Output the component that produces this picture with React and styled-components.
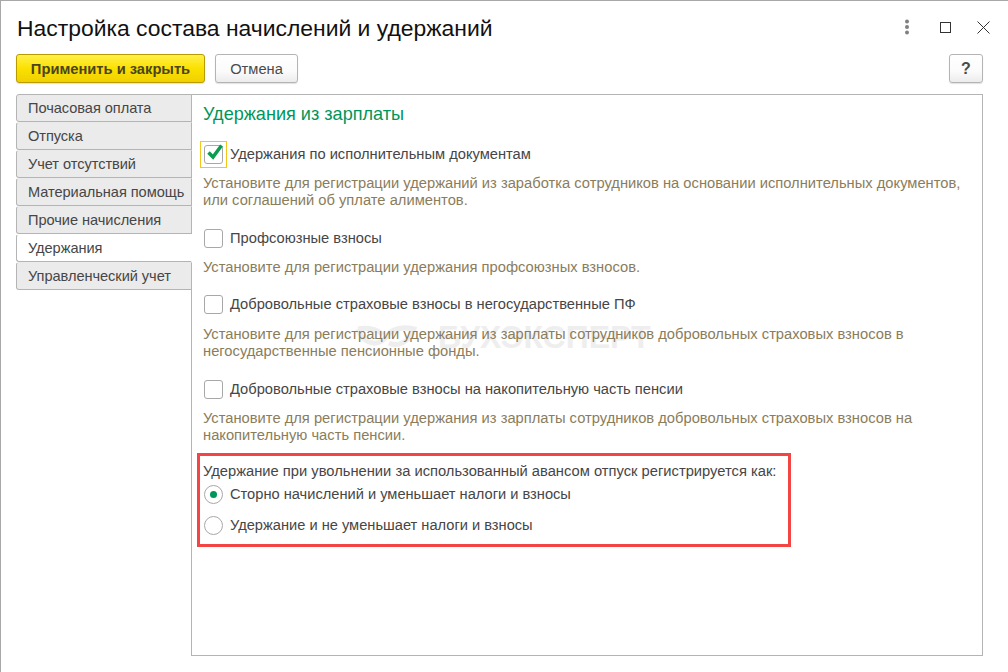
import React from "react";
import styled, {createGlobalStyle} from "styled-components";

const GlobalStyle = createGlobalStyle`
    html, body {
        margin: 0;
        padding: 0;
        background: #fff;
    }
    body {
        font-family: "Liberation Sans", Arial, sans-serif;
    }
`;

const Window = styled.div`
    box-sizing: border-box;
    width: 1008px;
    height: 672px;
    background: #fff;
    border-top: 1px solid #a8a8a8;
    border-left: 1px solid #a8a8a8;
    padding: 0 25px 0 15px;
    display: flex;
    flex-direction: column;
    overflow: hidden;
`;

const TitleBar = styled.div`
    display: flex;
    align-items: center;
    justify-content: space-between;
    height: 53px;
`;

const Title = styled.h1`
    margin: 0 0 0 1px;
    font-size: 22.9px;
    font-weight: 400;
    color: #111;
    line-height: 54px;
`;

const WindowIcons = styled.div`
    display: flex;
    align-items: center;
    margin-right: -7px;
    margin-top: -1px;
    svg { display: block; }
    svg:nth-child(1) { margin-right: 30px; }
    svg:nth-child(2) { margin-right: 26px; }
`;

const Toolbar = styled.div`
    display: flex;
    align-items: flex-start;
    height: 40px;
    gap: 10px;
`;

const Button = styled.button`
    box-sizing: border-box;
    height: 29px;
    padding: 0;
    width: ${p => p.$w}px;
    border: 1px solid ${p => (p.$primary ? "#b89b00" : "#b4b4b4")};
    border-radius: 3px;
    background: ${p => (p.$primary ? "linear-gradient(#fff04a 0%, #fbe100 50%, #f0d000 100%)" : "linear-gradient(#fff 0%, #fbfbfb 60%, #ececec 100%)")};
    box-shadow: 0 1px 1px rgba(0,0,0,.12);
    font-family: inherit;
    font-size: 14.7px;
    font-weight: ${p => (p.$primary ? 700 : 400)};
    color: ${p => (p.$primary ? "#4a4420" : "#4a4a4a")};
`;

const HelpButton = styled(Button)`
    margin-left: auto;
    font-size: 16px;
    font-weight: 700;
`;

const Main = styled.div`
    display: flex;
    align-items: stretch;
    height: 562px;
`;

const Tabs = styled.div`
    width: 176px;
    flex: none;
    position: relative;
    z-index: 1;
`;

const Tab = styled.div`
    box-sizing: border-box;
    height: 28px;
    padding: 0 0 1px 11px;
    display: flex;
    align-items: center;
    white-space: nowrap;
    font-size: 14.6px;
    letter-spacing: -0.05px;
    color: #464646;
    background: ${p => (p.$active ? "#fff" : "#ebebeb")};
    border: 1px solid #b4b4b4;
    border-right: ${p => (p.$active ? "1px solid #fff" : "1px solid #b4b4b4")};
    border-top-color: ${p => (p.$first ? "#b4b4b4" : "transparent")};
    border-radius: 3px 0 0 3px;
`;

const Content = styled.div`
    position: relative;
    box-sizing: border-box;
    flex: 1;
    margin-left: -1px;
    border: 1px solid #b4b4b4;
    padding: 9px 11px 0 11px;
`;

const Heading = styled.h2`
    margin: 0 0 20px;
    font-size: 18.1px;
    font-weight: 400;
    line-height: 20px;
    color: #00965a;
`;

const Section = styled.div`
    margin-bottom: ${p => p.$gap}px;
`;

const OptionRow = styled.div`
    display: flex;
    align-items: center;
    height: 20px;
    gap: 7px;
    font-size: 14.7px;
    color: #464646;
    white-space: nowrap;
`;

const Box = styled.span`
    position: relative;
    box-sizing: border-box;
    width: 19px;
    height: 19px;
    margin-left: 1px;
    flex: none;
    border: 1px solid #a8a8a8;
    border-radius: 3px;
    background: #fff;
    ${p => p.$focused && `
        &::before {
            content: "";
            position: absolute;
            inset: -5px;
            border: 1px solid #f5c518;
        }
    `}
    svg {
        position: absolute;
        left: 0;
        top: -3px;
    }
`;

const Help = styled.p`
    margin: ${p => p.$top || 11}px 0 0;
    font-size: 14.73px;
    line-height: 17px;
    color: #8a7d5c;
    white-space: nowrap;
`;

const RedFrame = styled.div`
    box-sizing: border-box;
    width: 594px;
    height: 94px;
    margin: 0 0 0 -6px;
    padding: 7px 0 0 3px;
    border: 3px solid #f44545;
`;

const FrameLabel = styled.div`
    font-size: 14.72px;
    line-height: 17px;
    color: #464646;
    white-space: nowrap;
`;

const RadioRow = styled(OptionRow)`
    margin-top: ${p => p.$top}px;
    font-size: 14.65px;
`;

const Radio = styled.span`
    box-sizing: border-box;
    width: 19px;
    height: 19px;
    margin-left: 1px;
    flex: none;
    border: 1px solid #a8a8a8;
    border-radius: 50%;
    background: #fff;
    display: flex;
    align-items: center;
    justify-content: center;
    &::after {
        content: "";
        display: ${p => (p.$on ? "block" : "none")};
        width: 7px;
        height: 7px;
        border-radius: 50%;
        background: #00965a;
    }
`;

const Watermark = styled.div`
    position: absolute;
    left: 163px;
    top: 224px;
    display: flex;
    align-items: center;
    gap: 21px;
    font-size: 32px;
    line-height: 36px;
    font-weight: 700;
    color: #eeeeee;
    z-index: 0;
    svg { display: block; }
`;

const ContentBody = styled.div`
    position: relative;
    z-index: 1;
`;

const tabs = [
    "Почасовая оплата",
    "Отпуска",
    "Учет отсутствий",
    "Материальная помощь",
    "Прочие начисления",
    "Удержания",
    "Управленческий учет",
];

function Option({label, checked, focused}) {
    return (
        <OptionRow>
            <Box $focused={focused}>
                {checked && (
                    <svg width="20" height="20" viewBox="0 0 20 20">
                        <path d="M3.5 9.5 L8 14 L16.5 2.5" fill="none" stroke="#0a9d50" strokeWidth="3.5" />
                    </svg>
                )}
            </Box>
            {label}
        </OptionRow>
    );
}

export default function App() {
    return (
        <Window>
            <GlobalStyle />
            <TitleBar>
                <Title>Настройка состава начислений и удержаний</Title>
                <WindowIcons>
                    <svg width="6" height="16" viewBox="0 0 6 16">
                        <circle cx="3" cy="2.5" r="2" fill="#808080" />
                        <circle cx="3" cy="8" r="2" fill="#808080" />
                        <circle cx="3" cy="13.5" r="2" fill="#808080" />
                    </svg>
                    <svg width="11" height="11" viewBox="0 0 11 11">
                        <rect x="0.5" y="0.5" width="10" height="10" fill="none" stroke="#333" />
                    </svg>
                    <svg width="13" height="13" viewBox="0 0 13 13">
                        <path d="M0.5 0.5 L12.5 12.5 M12.5 0.5 L0.5 12.5" stroke="#333" strokeWidth="1" />
                    </svg>
                </WindowIcons>
            </TitleBar>
            <Toolbar>
                <Button $primary $w={189}>Применить и закрыть</Button>
                <Button $w={83}>Отмена</Button>
                <HelpButton $w={34}>?</HelpButton>
            </Toolbar>
            <Main>
                <Tabs>
                    {tabs.map((t, i) => (
                        <Tab key={t} $first={i === 0} $active={t === "Удержания"}>{t}</Tab>
                    ))}
                </Tabs>
                <Content>
                    <Watermark>
                        <svg width="62" height="24" viewBox="0 0 62 24">
                            <path d="M3 4 C8 20 24 22 31 12 C38 2 50 2 59 4 C54 18 42 22 34 18 M3 4 C12 2 22 4 28 10" fill="none" stroke="#eeeeee" strokeWidth="5" />
                        </svg>
                        БУХЭКСПЕРТ
                    </Watermark>
                    <ContentBody>
                        <Heading>Удержания из зарплаты</Heading>
                        <Section $gap={19}>
                            <Option label="Удержания по исполнительным документам" checked focused />
                            <Help>Установите для регистрации удержаний из заработка сотрудников на основании исполнительных документов,<br />или соглашений об уплате алиментов.</Help>
                        </Section>
                        <Section $gap={18}>
                            <Option label="Профсоюзные взносы" />
                            <Help>Установите для регистрации удержания профсоюзных взносов.</Help>
                        </Section>
                        <Section $gap={19}>
                            <Option label="Добровольные страховые взносы в негосударственные ПФ" />
                            <Help $top={12}>Установите для регистрации удержания из зарплаты сотрудников добровольных страховых взносов в<br />негосударственные пенсионные фонды.</Help>
                        </Section>
                        <Section $gap={9}>
                            <Option label="Добровольные страховые взносы на накопительную часть пенсии" />
                            <Help>Установите для регистрации удержания из зарплаты сотрудников добровольных страховых взносов на<br />накопительную часть пенсии.</Help>
                        </Section>
                        <RedFrame>
                            <FrameLabel>Удержание при увольнении за использованный авансом отпуск регистрируется как:</FrameLabel>
                            <RadioRow $top={4}><Radio $on />Сторно начислений и уменьшает налоги и взносы</RadioRow>
                            <RadioRow $top={11}><Radio />Удержание и не уменьшает налоги и взносы</RadioRow>
                        </RedFrame>
                    </ContentBody>
                </Content>
            </Main>
        </Window>
    );
}
